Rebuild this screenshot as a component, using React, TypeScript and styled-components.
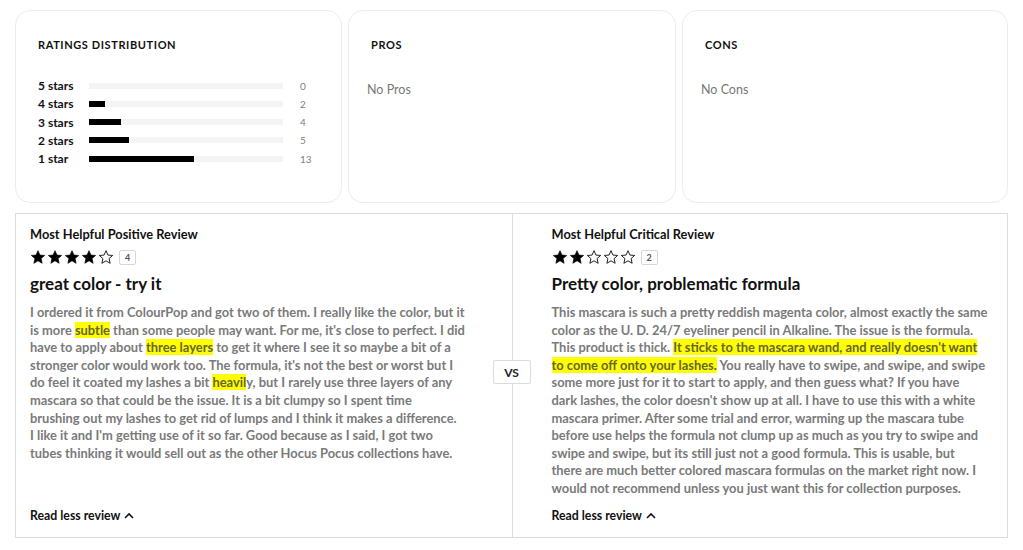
import React from 'react';
import styled, { createGlobalStyle } from 'styled-components';

const GlobalStyle = createGlobalStyle`
  body {
    margin: 0;
    background: #fff;
    font-family: Lato, "Liberation Sans", sans-serif;
    color: #111;
  }
`;

const Page = styled.div`
  width: 993px;
  padding: 10px 15px;
  display: flex;
  flex-direction: column;
  gap: 10px;
`;

const TopRow = styled.div`
  display: grid;
  grid-template-columns: 327px 328px 326px;
  gap: 6px;
`;

const Card = styled.div`
  height: 193px;
  box-sizing: border-box;
  border: 1px solid #ececec;
  border-radius: 15px;
  padding: 27px 22px 0;
`;

const CardTitle = styled.div`
  font-size: 11px;
  font-weight: 700;
  letter-spacing: 0.6px;
  text-transform: uppercase;
  color: #111;
  margin-bottom: 27px;
`;

const Empty = styled.div`
  font-size: 12.5px;
  color: #777;
  margin-left: -4px;
  padding-top: 4px;
`;

const DistList = styled.div`
  display: flex;
  flex-direction: column;
  gap: 4px;
`;

const DistRow = styled.div`
  display: grid;
  grid-template-columns: 51px 194px 1fr;
  align-items: center;
  height: 14.3px;
`;

const DistLabel = styled.span`
  font-size: 12px;
  font-weight: 700;
`;

const Track = styled.div`
  height: 6px;
  background: #f4f4f4;
`;

const Fill = styled.div`
  height: 100%;
  background: #000;
`;

const DistCount = styled.span`
  font-size: 10px;
  color: #808080;
  padding-left: 17px;
`;

const ReviewPanel = styled.div`
  display: grid;
  grid-template-columns: 1fr 1fr;
  border: 1px solid #dcdcdc;
  height: 325px;
  box-sizing: border-box;
`;

const Review = styled.div<{ $side: 'left' | 'right' }>`
  position: relative;
  display: flex;
  flex-direction: column;
  padding: ${({ $side }) => ($side === 'left' ? '12px 20px 14px 14px' : '12px 10px 14px 39px')};
  border-left: ${({ $side }) => ($side === 'right' ? '1px solid #dcdcdc' : 'none')};
`;

const ReviewKind = styled.div`
  font-size: 12.8px;
  font-weight: 700;
  color: #111;
`;

const StarRow = styled.div`
  display: flex;
  align-items: center;
  gap: 1px;
  margin-top: 7px;
`;

const CountBox = styled.span`
  margin-left: 4px;
  border: 1px solid #d6d6d6;
  border-radius: 2px;
  font-size: 9px;
  font-weight: 700;
  color: #555;
  padding: 1px 5px;
  line-height: 11px;
`;

const ReviewTitle = styled.div`
  font-size: 17px;
  font-weight: 700;
  color: #111;
  margin-top: 8px;
`;

const Body = styled.p`
  margin: 10px 0 0;
  font-size: 12.9px;
  line-height: 17.6px;
  font-weight: 700;
  color: #7a7a7a;
`;

const Line = styled.span`
  display: block;
  white-space: nowrap;
`;

const Mark = styled.span`
  background: #ffff00;
  color: #66662e;
`;

const ReadLess = styled.button`
  margin-top: auto;
  align-self: flex-start;
  display: flex;
  align-items: center;
  gap: 3px;
  border: none;
  background: none;
  padding: 0;
  font-family: inherit;
  font-size: 12.3px;
  font-weight: 700;
  color: #111;
`;

const VsBadge = styled.div`
  position: absolute;
  left: -20px;
  top: 146px;
  width: 38px;
  height: 24px;
  box-sizing: border-box;
  border: 1px solid #dcdcdc;
  border-radius: 2px;
  background: #fff;
  display: flex;
  align-items: center;
  justify-content: center;
  font-size: 12px;
  font-weight: 700;
  color: #222;
`;

const Star = ({ filled }: { filled: boolean }) => (
  <svg width="16" height="16" viewBox="0 0 24 24">
    <path
      d="M12 2.5l2.9 6.6 7.1.6-5.4 4.7 1.6 7-6.2-3.7-6.2 3.7 1.6-7L2 9.7l7.1-.6z"
      fill={filled ? '#000' : 'none'}
      stroke="#000"
      strokeWidth={filled ? 1 : 1.3}
      strokeLinejoin="round"
    />
  </svg>
);

const ChevronUp = () => (
  <svg width="12" height="12" viewBox="0 0 12 12">
    <path d="M2 8l4-4 4 4" fill="none" stroke="#111" strokeWidth="1.6" />
  </svg>
);

const dist = [
  { label: '5 stars', count: 0 },
  { label: '4 stars', count: 2 },
  { label: '3 stars', count: 4 },
  { label: '2 stars', count: 5 },
  { label: '1 star', count: 13 },
];
const total = dist.reduce((s, d) => s + d.count, 0);

// a line is a list of plain strings and highlighted bits ({ hl })
type Seg = string | { hl: string };

const positive: Seg[][] = [
  ['I ordered it from ColourPop and got two of them. I really like the color, but it'],
  ['is more ', { hl: 'subtle' }, " than some people may want. For me, it's close to perfect. I did"],
  ['have to apply about ', { hl: 'three layers' }, ' to get it where I see it so maybe a bit of a'],
  ["stronger color would work too. The formula, it's not the best or worst but I"],
  ['do feel it coated my lashes a bit ', { hl: 'heavil' }, 'y, but I rarely use three layers of any'],
  ['mascara so that could be the issue. It is a bit clumpy so I spent time'],
  ['brushing out my lashes to get rid of lumps and I think it makes a difference.'],
  ["I like it and I'm getting use of it so far. Good because as I said, I got two"],
  ['tubes thinking it would sell out as the other Hocus Pocus collections have.'],
];

const critical: Seg[][] = [
  ['This mascara is such a pretty reddish magenta color, almost exactly the same'],
  ['color as the U. D. 24/7 eyeliner pencil in Alkaline. The issue is the formula.'],
  ['This product is thick. ', { hl: "It sticks to the mascara wand, and really doesn't want" }],
  [{ hl: 'to come off onto your lashes.' }, ' You really have to swipe, and swipe, and swipe'],
  ['some more just for it to start to apply, and then guess what? If you have'],
  ["dark lashes, the color doesn't show up at all. I have to use this with a white"],
  ['mascara primer. After some trial and error, warming up the mascara tube'],
  ['before use helps the formula not clump up as much as you try to swipe and'],
  ['swipe and swipe, but its still just not a good formula. This is usable, but'],
  ['there are much better colored mascara formulas on the market right now. I'],
  ['would not recommend unless you just want this for collection purposes.'],
];

const Stars = ({ rating }: { rating: number }) => (
  <StarRow>
    {[1, 2, 3, 4, 5].map((i) => (
      <Star key={i} filled={i <= rating} />
    ))}
    <CountBox>{rating}</CountBox>
  </StarRow>
);

const ReviewText = ({ lines }: { lines: Seg[][] }) => (
  <Body>
    {lines.map((line, i) => (
      <Line key={i}>
        {line.map((seg, j) => (typeof seg === 'string' ? seg : <Mark key={j}>{seg.hl}</Mark>))}
      </Line>
    ))}
  </Body>
);

export default function App() {
  return (
    <Page>
      <GlobalStyle />
      <TopRow>
        <Card>
          <CardTitle>Ratings Distribution</CardTitle>
          <DistList>
            {dist.map((d) => (
              <DistRow key={d.label}>
                <DistLabel>{d.label}</DistLabel>
                <Track>
                  <Fill style={{ width: `${(d.count / total) * 100}%` }} />
                </Track>
                <DistCount>{d.count}</DistCount>
              </DistRow>
            ))}
          </DistList>
        </Card>
        <Card>
          <CardTitle>Pros</CardTitle>
          <Empty>No Pros</Empty>
        </Card>
        <Card>
          <CardTitle>Cons</CardTitle>
          <Empty>No Cons</Empty>
        </Card>
      </TopRow>

      <ReviewPanel>
        <Review $side="left">
          <ReviewKind>Most Helpful Positive Review</ReviewKind>
          <Stars rating={4} />
          <ReviewTitle>great color - try it</ReviewTitle>
          <ReviewText lines={positive} />
          <ReadLess>
            Read less review <ChevronUp />
          </ReadLess>
        </Review>
        <Review $side="right">
          <VsBadge>VS</VsBadge>
          <ReviewKind>Most Helpful Critical Review</ReviewKind>
          <Stars rating={2} />
          <ReviewTitle>Pretty color, problematic formula</ReviewTitle>
          <ReviewText lines={critical} />
          <ReadLess>
            Read less review <ChevronUp />
          </ReadLess>
        </Review>
      </ReviewPanel>
    </Page>
  );
}
